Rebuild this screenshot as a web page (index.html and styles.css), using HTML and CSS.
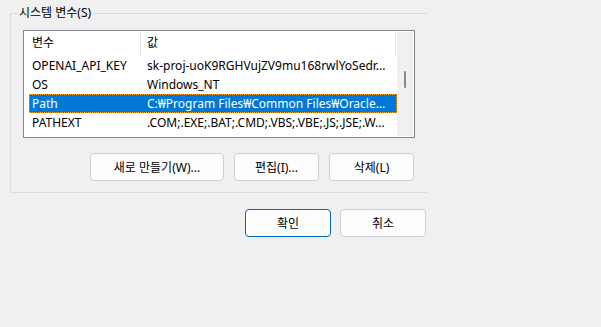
FILE: index.html
```html
<!DOCTYPE html>
<html lang="ko">
<head>
<meta charset="utf-8">
<link rel="stylesheet" href="styles.css">
</head>
<body>
<fieldset class="group">
  <legend class="group-title">시스템 변수(S)</legend>
  <div class="list">
    <div class="list-main">
      <div class="row header"><span class="c1">변수</span><span class="c2">값</span></div>
      <div class="row"><span class="c1">OPENAI_API_KEY</span><span class="c2">sk-proj-uoK9RGHVujZV9mu168rwlYoSedr...</span></div>
      <div class="row"><span class="c1">OS</span><span class="c2">Windows_NT</span></div>
      <div class="row selected"><span class="c1">Path</span><span class="c2">C:₩Program Files₩Common Files₩Oracle₩...</span></div>
      <div class="row"><span class="c1">PATHEXT</span><span class="c2">.COM;.EXE;.BAT;.CMD;.VBS;.VBE;.JS;.JSE;.W...</span></div>
    </div>
    <div class="scrollbar"><div class="thumb"></div></div>
  </div>
  <div class="actions">
    <button class="btn wide">새로 만들기(W)...</button>
    <button class="btn">편집(I)...</button>
    <button class="btn">삭제(L)</button>
  </div>
</fieldset>
<div class="dialog-actions">
  <button class="btn dlg primary">확인</button>
  <button class="btn dlg">취소</button>
</div>
</body>
</html>
```

FILE: styles.css
```css
html, body {
  margin: 0;
  background: #f0f0f0;
}
body {
  padding: 5px 0 0 10px;
  font-family: "Segoe UI", "Noto Sans", "Noto Sans CJK KR", sans-serif;
  font-size: 12px;
  color: #000;
  width: 417px;
}
.group {
  box-sizing: border-box;
  width: 417px;
  margin: 0;
  padding: 9px 12px 11px 12px;
  border: 1px solid #dcdcdc;
}
.group-title {
  margin-left: -6px;
  padding: 0 2px;
  line-height: 16px;
  font-size: 12px;
}
.list {
  box-sizing: border-box;
  height: 108px;
  border: 1px solid #828790;
  background: #fff;
  display: flex;
  overflow: hidden;
}
.list-main {
  flex: 1;
  padding-left: 5px;
  overflow: hidden;
}
.row {
  display: flex;
  width: 368px;
  height: 19px;
  line-height: 19px;
  white-space: nowrap;
}
.row .c1 {
  box-sizing: border-box;
  width: 112px;
  padding-left: 3px;
  flex: none;
  overflow: hidden;
}
.row .c2 {
  box-sizing: border-box;
  flex: 1;
  padding-left: 6px;
  padding-right: 10px;
  overflow: hidden;
  text-overflow: ellipsis;
}
.row.header {
  height: 25px;
  line-height: 22px;
  width: 367px;
}
.row.header .c1,
.row.header .c2 {
  height: 24px;
  border-right: 1px solid #e5e5e5;
  margin-top: 1px;
}
.row.selected {
  background: #0078d7;
  color: #fff;
  outline: 1px dotted #f7a234;
  outline-offset: -1px;
}
.scrollbar {
  position: relative;
  width: 16px;
  margin: 1px 1px 1px 0;
  background: #f0f0f0;
  flex: none;
}
.thumb {
  position: absolute;
  left: 7px;
  top: 39px;
  width: 2px;
  height: 17px;
  background: #8a8a8a;
  border-radius: 1px;
}
.actions {
  display: flex;
  justify-content: flex-end;
  gap: 10px;
  margin-top: 15px;
  margin-right: 1px;
}
.btn {
  box-sizing: border-box;
  width: 85px;
  height: 28px;
  padding: 0;
  border: 1px solid #d0d0d0;
  border-radius: 4px;
  background: #fdfdfd;
  font-family: inherit;
  font-size: 12px;
  color: #000;
}
.btn.wide {
  width: 134px;
}
.dialog-actions {
  display: flex;
  justify-content: flex-end;
  gap: 9px;
  margin-top: 16px;
  margin-right: 1px;
}
.btn.dlg {
  width: 86px;
}
.btn.primary {
  border-color: #0067c0;
}
```
